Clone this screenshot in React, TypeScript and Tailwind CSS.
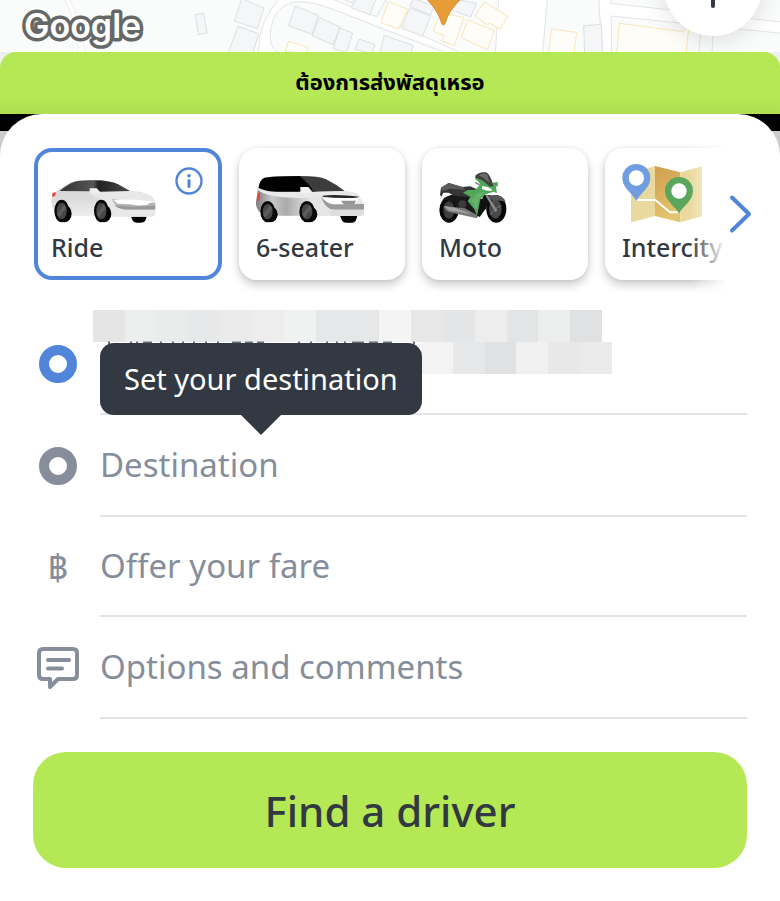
import React from 'react';
import clsx from 'clsx';

const firstRowCells = [
  'bg-[#e5e5e5]', 'bg-[#eceeed]', 'bg-[#eaeceb]', 'bg-[#e6e8ea]',
  'bg-[#ebebeb]', 'bg-[#ededed]', 'bg-[#f0f2f1]', 'bg-[#e6e7e9]',
  'bg-[#e5e7e9]', 'bg-[#f4f4f4]', 'bg-[#e7e7e7]', 'bg-[#e3e5e7]',
  'bg-[#ededed]', 'bg-[#e2e4e6]', 'bg-[#ebeeec]', 'bg-[#dfe1e2]',
];

const secondRowCells = [
  'bg-[#f3f3f3]', 'bg-[#e5e7e9]', 'bg-[#e0e1e3]',
  'bg-[#f0f0f0]', 'bg-[#e8e8e8]', 'bg-[#ebebeb]',
];

function MapStrip() {
  return (
    <svg
      className="absolute inset-0 h-full w-full"
      viewBox="0 0 2340 156"
      preserveAspectRatio="xMidYMin slice"
      aria-hidden="true"
    >
      <rect width="2340" height="156" fill="#fafcfb" />
      {/* roads */}
      <g fill="#fff" stroke="#e2e4e5" strokeWidth="3">
        <path d="M192 -5 Q228 60 236 160 L255 160 Q246 60 206 -5Z" stroke="#eeeff0" />
        <path d="M840 -5 Q775 60 775 160 L832 158 Q805 140 812 90 Q822 20 880 6 Q930 0 1010 32 L1500 208 L1500 160 L1640 160 L1642 -5 L1495 -5 L1484 160 L1400 160 L1170 75 L990 -5Z" stroke="none" />
        <path d="M840 -5 Q775 60 775 160" fill="none" />
        <path d="M832 156 Q805 140 812 90 Q822 20 880 6 Q930 0 1010 32 L1170 95 L1340 160" fill="none" />
        <path d="M990 -5 L1130 50 L1160 -5" fill="none" />
        <path d="M1170 62 L1385 160" fill="none" />
        <path d="M1496 -5 L1486 160 L1628 160 L1642 -5Z" stroke="none" />
        <path d="M1496 -5 L1486 160" fill="none" />
        <path d="M1642 -5 L1628 160 L1836 160 L1834 48 L2345 98 L2345 65 L1832 10 L1834 -5Z" stroke="none" />
        <path d="M1795 -5 L1808 160 M1834 -5 L1832 10 L2345 66 M1834 160 L1834 48 L2345 100 M2103 80 L2097 160 M2140 85 L2136 160" fill="none" />
      </g>
      <path d="M1642 -5 L1628 160 L1806 160 L1796 -5Z" fill="#fafcfb" stroke="#e2e4e5" strokeWidth="3" />
      {/* houses */}
      <g fill="#f5f6f8" stroke="#dcdee2" strokeWidth="3">
        <path d="M586 44 L611 40 L621 99 L595 104Z" />
        <path d="M725 -4 L792 24 L772 86 L703 63Z" />
        <path d="M714 79 L776 101 L758 160 L684 160Z" />
        <path d="M886 18 L955 46 L936 103 L865 77Z" />
        <path d="M958 52 L1021 82 L999 134 L937 107Z" />
        <path d="M1018 84 L1058 99 L1040 158 L1000 146Z" />
        <path d="M1022 -5 L1060 10 L1068 -5Z" />
        <path d="M1070 -5 L1128 -5 L1110 44 L1054 23Z" />
        <path d="M1078 117 L1125 134 L1116 160 L1064 148Z" />
        <path d="M1152 106 L1240 136 L1232 160 L1140 160Z" />
        <path d="M1228 25 L1292 47 L1268 109 L1205 84Z" />
        <path d="M1240 -5 L1302 18 L1292 45 L1230 20Z" />
        <path d="M1355 -5 L1430 10 L1412 51 L1350 28Z" />
        <path d="M1751 77 L1804 73 L1808 160 L1754 160Z" />
      </g>
      <g fill="#fffdf7" stroke="#fae5b8" strokeWidth="3">
        <path d="M1165 5 L1222 27 L1196 87 L1143 68Z" />
        <path d="M866 123 L924 143 L918 160 L856 154Z" />
        <path d="M1452 6 L1524 48 L1501 88 L1470 70 L1462 74 L1426 48Z" />
        <path d="M1404 60 L1483 92 L1462 149 L1383 113Z" />
        <path d="M1320 40 L1392 52 L1363 137 L1325 122 L1332 106 L1299 93Z" />
        <path d="M1655 87 L1730 97 L1722 160 L1645 160Z" />
        <path d="M1858 70 L2050 95 L2056 82 L2066 84 L2058 160 L1849 160Z" />
      </g>
      {/* pickup marker tip */}
      <path d="M1280 -3 Q1315 32 1325 70 Q1330 80 1335 70 Q1345 32 1383 -3Z" fill="#e69d38" stroke="#d68b2b" strokeWidth="3" />
    </svg>
  );
}

function Wheel({ cx, cy, rx, ry }: { cx: number; cy: number; rx: number; ry: number }) {
  return (
    <g>
      <ellipse cx={cx + 8} cy={cy + 8} rx={rx} ry={ry - 8} fill="#000" />
      <ellipse cx={cx} cy={cy} rx={rx} ry={ry} fill="#080808" />
      <ellipse cx={cx} cy={cy} rx={rx - 7} ry={ry - 9} fill="#474747" />
      <path d={`M${cx - 14} ${cy + 8} L${cx + 8} ${cy - 20} L${cx + 14} ${cy - 8} L${cx - 8} ${cy + 19}Z`} fill="#5c5c5c" />
    </g>
  );
}

function RideCar() {
  return (
    <svg className="h-[58px] w-[106px] overflow-visible" viewBox="93 75 318 174" aria-hidden="true">
      <defs>
        <linearGradient id="rideBody" x1="0" y1="0" x2="0" y2="1">
          <stop offset="0" stopColor="#cfcfcf" />
          <stop offset="0.5" stopColor="#dcdcdc" />
          <stop offset="1" stopColor="#eeeeee" />
        </linearGradient>
        <linearGradient id="rideGlass" x1="0" y1="0" x2="1" y2="0">
          <stop offset="0" stopColor="#333" />
          <stop offset="0.48" stopColor="#555" />
          <stop offset="0.55" stopColor="#222" />
          <stop offset="1" stopColor="#4a4a4a" />
        </linearGradient>
      </defs>
      <path d="M332 224 H380 Q380 248 362 248 H350 Q336 248 332 224Z" fill="#000" />
      <path d="M98 162 Q122 142 150 128 Q170 119 220 120 Q275 120 295 133 L332 153 Q380 156 398 172 Q408 184 406 222 Q404 229 394 230 L150 228 L112 224 Q90 200 94 180Z" fill="url(#rideBody)" />
      <path d="M210 160 Q280 150 335 153 Q380 157 398 172 L406 192 L405 222 Q404 229 394 230 H270 Q268 180 240 176 Q222 172 210 160Z" fill="#e8e8e8" />
      <path d="M119 153 Q142 133 164 125 Q185 119 226 121 Q270 122 294 133 L330 153 L238 155 L230 147 L212 146 L209 154Z" fill="url(#rideGlass)" />
      <path d="M209 145 L230 145 L240 155 L236 161 L209 160Z" fill="#eeeeee" />
      <path d="M97 160 L107 156 L106 167 L97 171Z" fill="#ed3f32" />
      <path d="M276 177 Q300 178 318 187 Q350 193 406 188 V209 H318 Q286 207 276 177Z" fill="#b4b4b4" />
      <path d="M280 180 Q340 176 396 184 L382 194 Q350 199 330 193 L293 191Z" fill="#fff" />
      <path d="M283 195 Q310 202 405 198 V208 H316 Q293 207 283 195Z" fill="#999" />
      <Wheel cx={125} cy={213} rx={22} ry={34} />
      <Wheel cx={244} cy={213} rx={22} ry={34} />
    </svg>
  );
}

function SixSeaterCar() {
  return (
    <svg className="h-[58px] w-[108px] overflow-visible" viewBox="78 75 324 174" aria-hidden="true">
      <defs>
        <linearGradient id="vanBody" x1="0" y1="0" x2="1" y2="0">
          <stop offset="0" stopColor="#808080" />
          <stop offset="0.15" stopColor="#c9c9c9" />
          <stop offset="0.28" stopColor="#aaa" />
          <stop offset="0.5" stopColor="#e4e4e4" />
          <stop offset="1" stopColor="#eaeaea" />
        </linearGradient>
      </defs>
      <path d="M330 224 H382 Q380 248 366 248 H348 Q334 248 330 224Z" fill="#000" />
      <path d="M82 160 Q84 130 102 114 Q120 108 190 108 Q270 108 290 118 Q320 134 344 153 Q385 158 389 170 L402 192 V222 Q400 228 390 228 L140 227 L88 216 Q76 200 78 186Z" fill="url(#vanBody)" />
      <path d="M86 143 Q88 122 102 114 Q122 108 212 108 L260 155 H120 Q98 150 86 143Z" fill="#000" />
      <path d="M208 108 Q268 108 288 118 Q318 133 344 153 L250 155 Q240 132 208 108Z" fill="#3c3c3c" />
      <path d="M84 145 Q105 154 140 156 L235 156 L350 154 Q385 158 389 168 L275 168 Q230 176 190 173 Q110 172 84 150Z" fill="#e9e9e9" />
      <path d="M211 141 H235 L246 154 L240 160 H211Z" fill="#f2f2f2" />
      <path d="M83 160 L90 158 V180 L81 184Z" fill="#ee4237" />
      <path d="M274 171 Q300 192 330 192 H402 V209 H312 Q284 207 274 171Z" fill="#9b9b9b" />
      <path d="M278 167 Q320 162 388 170 L380 173 Q330 176 278 170Z" fill="#262626" />
      <path d="M276 173 Q330 176 386 173 L377 193 H310 Q288 188 276 173Z" fill="#fff" />
      <path d="M333 182 H378 L373 194 H342Z" fill="#969696" />
      <path d="M304 209 H402 V222 Q400 228 390 228 H300Z" fill="#dedede" />
      <Wheel cx={113} cy={215} rx={22} ry={32} />
      <Wheel cx={231} cy={215} rx={23} ry={32} />
    </svg>
  );
}

function Motorcycle() {
  return (
    <svg className="h-[58px] w-[68px] overflow-visible" viewBox="72 75 204 174" aria-hidden="true">
      <ellipse cx="102" cy="210" rx="29" ry="38" fill="#080808" />
      <ellipse cx="102" cy="210" rx="17" ry="26" fill="#3f3f3f" />
      <ellipse cx="244" cy="207" rx="30" ry="41" fill="#080808" />
      <ellipse cx="241" cy="207" rx="19" ry="29" fill="#484848" />
      <path d="M228 190 L240 207 L226 224 M240 207 L259 197" stroke="#777" strokeWidth="3" fill="none" />
      <path d="M84 176 Q110 158 160 160 L208 180 L215 205 L188 230 L130 220 L118 190Z" fill="#191919" />
      <circle cx="142" cy="193" r="12" fill="#3b3b3b" />
      <path d="M75 165 L78 143 L101 129 L142 141 L166 139 L190 150 L174 172 L120 168 L100 158 L85 158 L79 170Z" fill="#353535" />
      <path d="M78 143 L101 129 L142 141 L152 150 L105 146 L82 154Z" fill="#5a5a5a" />
      <path d="M86 198 L150 205 L186 225 V235 L104 217 Q90 212 86 198Z" fill="#777" />
      <path d="M86 198 L120 203 L170 222 L104 212Z" fill="#a4a4a4" />
      <path d="M205 165 L228 166 L222 190 L194 232 L188 225Z" fill="#111" />
      <path d="M215 166 L244 214" stroke="#8b8b8b" strokeWidth="7" />
      <path d="M218 168 Q262 158 272 186 Q250 178 234 184Z" fill="#555" />
      <path d="M179 114 L190 108 L232 128 L248 126 L249 136 L243 142 L246 160 L236 155 L212 163 L196 178 L186 228 L178 208 L158 184 L166 170 L144 158 L158 150 L180 150 L196 133Z" fill="#52a65a" />
      <path d="M186 160 L210 156 L192 178 L184 210 L176 190 L164 181 L178 172Z" fill="#75bb7a" opacity="0.6" />
      <path d="M181 107 Q192 94 213 97 Q226 102 235 137 L225 140 Q200 116 181 113Z" fill="#414141" />
      <path d="M190 105 Q206 96 217 104 L224 129 Q208 113 190 105Z" fill="#696969" />
      <path d="M201 139 Q215 137 231 148 L229 153 Q212 153 201 147Z" fill="#fff" />
      <path d="M181 127 L194 135" stroke="#777" strokeWidth="4" />
    </svg>
  );
}

function IntercityMap() {
  return (
    <svg className="h-[58px] w-[80px] overflow-visible" viewBox="96 75 240 174" aria-hidden="true">
      <defs>
        <linearGradient id="mapFold" x1="0" y1="0" x2="0.3" y2="1">
          <stop offset="0" stopColor="#cf9d4e" />
          <stop offset="1" stopColor="#e4c46c" />
        </linearGradient>
      </defs>
      <path d="M123 98 L195 78 V228 L123 247Z" fill="#ead99f" />
      <path d="M195 78 L271 97 V247 L195 228Z" fill="url(#mapFold)" />
      <path d="M271 97 L336 79 V229 L271 247Z" fill="#ead99f" />
      <path d="M139 180 H196 L240 217 H266" fill="none" stroke="#fff" strokeWidth="6" />
      <path d="M139 183 C130 162 97 145 97 114 A42 42 0 0 1 181 114 C181 145 148 162 139 183Z" fill="#719de1" />
      <circle cx="139" cy="114" r="23" fill="#fff" />
      <path d="M267 221 C258 200 225 184 225 153 A42 42 0 0 1 309 153 C309 184 276 200 267 221Z" fill="#5aa65d" />
      <circle cx="267" cy="153" r="23" fill="#fff" />
    </svg>
  );
}

const services = [
  { name: 'Ride', icon: <RideCar />, selected: true },
  { name: '6-seater', icon: <SixSeaterCar />, selected: false },
  { name: 'Moto', icon: <Motorcycle />, selected: false },
  { name: 'Intercity', icon: <IntercityMap />, selected: false },
];

function ServiceCard({ name, icon, selected }: (typeof services)[number]) {
  return (
    <button
      type="button"
      aria-pressed={selected}
      className={clsx(
        'flex shrink-0 flex-col gap-2 rounded-[18px] bg-white text-left',
        selected
          ? 'w-[188px] border-4 border-[#5185da] p-[13px]'
          : 'w-[166px] p-[17px] shadow-[0_5px_10px_rgba(0,0,0,0.2),0_0_4px_rgba(0,0,0,0.08)]'
      )}
    >
      <span className="flex w-full items-start justify-between">
        {icon}
        {selected && (
          <svg className="mt-0.5 mr-0.5 h-7 w-7" viewBox="0 0 28 28" fill="none" stroke="#5185da" strokeWidth="2.4" aria-hidden="true">
            <circle cx="14" cy="14" r="12.5" />
            <path d="M14 13.5 V19.5" strokeWidth="3" strokeLinecap="round" />
            <circle cx="14" cy="8.8" r="1.8" fill="#5185da" stroke="none" />
          </svg>
        )}
      </span>
      <span className="text-[25px] leading-8 font-medium text-[#323942]">{name}</span>
    </button>
  );
}

function PointIcon({ className }: { className: string }) {
  return <span className={clsx('block h-[38px] w-[38px] rounded-full border-[10px]', className)} />;
}

function CommentIcon() {
  return (
    <svg className="h-[42px] w-[42px]" viewBox="0 0 42 42" fill="none" stroke="#868e9b" strokeWidth="4" strokeLinejoin="round" strokeLinecap="round" aria-hidden="true">
      <path d="M6 2 H36 Q40 2 40 6 V28 Q40 32 36 32 H21 L13 40 V32 H6 Q2 32 2 28 V6 Q2 2 6 2Z" />
      <path d="M11 13 H32 M11 21.5 H25" />
    </svg>
  );
}

function FieldRow({ icon, label, className }: { icon: React.ReactNode; label: string; className: string }) {
  return (
    <label className={clsx('flex items-stretch gap-[17px]', className)}>
      <span className="flex w-[50px] shrink-0 items-center justify-center">{icon}</span>
      <input
        type="text"
        aria-label={label}
        placeholder={label}
        className="min-w-0 flex-1 border-b-2 border-[#e1e3e8] bg-transparent text-[33px] text-[#323942] outline-none placeholder:text-[#868e9b] placeholder:opacity-100"
      />
    </label>
  );
}

function PickupRow() {
  return (
    <div className="flex h-[102px] items-stretch gap-[17px]">
      <span className="flex w-[50px] shrink-0 items-center justify-center">
        <PointIcon className="border-[#5185da]" />
      </span>
      <div className="relative min-w-0 flex-1 border-b-2 border-[#e1e3e8]">
        {/* masked address */}
        <div className="absolute -top-[3px] -left-[7px] flex h-8 w-[509px]">
          {firstRowCells.map((cell, i) => (
            <span key={i} className={clsx('flex-1', cell)} />
          ))}
        </div>
        <div className="absolute top-[29px] left-[321px] flex h-8 w-[191px]">
          {secondRowCells.map((cell, i) => (
            <span key={i} className={clsx('flex-1', cell)} />
          ))}
        </div>
        <svg className="absolute top-[28px] left-0 h-1 w-[320px]" viewBox="0 0 320 4" aria-hidden="true">
          <path
            d="M8 2 H10 M30 2 H32 M36 2 H38 M43 2 H52 M60 2 H62 M72 2 H74 M82 2 H84 M93 2 H95 M105 2 H107 M117 2 H119 M132 2 H141 M145 2 H153 M157 2 H164 M198 2 H200 M210 2 H212 M226 2 H228 M236 2 H238 M244 2 H246 M252 2 H264 M269 2 H278 M283 2 H292 M313 2 H315"
            stroke="#6b7078"
            strokeWidth="3"
          />
        </svg>
        <div role="tooltip" className="absolute top-[30px] left-0 z-10 rounded-[14px] bg-[#323942] px-6 py-4 text-[29px] leading-10 whitespace-nowrap text-white">
          Set your destination
          <svg className="absolute top-full left-1/2 h-5 w-10 -translate-x-1/2" viewBox="0 0 40 20" aria-hidden="true">
            <path d="M0 0 H40 L20 20Z" fill="#323942" />
          </svg>
        </div>
      </div>
    </div>
  );
}

export default function App() {
  return (
    <main className="min-h-screen bg-white font-['Noto_Sans','Noto_Sans_Thai',sans-serif]">
      <header className="relative h-[52px] overflow-hidden">
        <MapStrip />
        <svg className="absolute top-0 left-5 h-[52px] w-[126px]" viewBox="0 0 126 52" role="img" aria-label="Google">
          <text
            x="4"
            y="38"
            fontFamily="Inter, sans-serif"
            fontSize="34"
            fontWeight="600"
            fill="#fff"
            stroke="#666867"
            strokeWidth="7"
            strokeLinejoin="round"
            paintOrder="stroke"
          >
            Google
          </text>
        </svg>
        <button
          type="button"
          aria-label="My location"
          className="absolute -top-[62px] right-[18px] flex h-[98px] w-[98px] items-end justify-center rounded-full bg-white pb-7 shadow-[0_4px_24px_rgba(0,0,0,0.12)]"
        >
          <svg className="h-9 w-9" viewBox="0 0 36 36" fill="none" stroke="#323942" strokeWidth="4" strokeLinecap="round" aria-hidden="true">
            <circle cx="18" cy="13" r="13" />
            <path d="M18 26 V34" />
          </svg>
        </button>
      </header>

      <div className="bg-[#eef0ef]">
        <a
          href="#parcel"
          className="flex h-[62px] items-center justify-center rounded-t-2xl bg-[#b4e654] bg-linear-to-b from-[#b5e854] from-70% to-[#aedf52] pb-1 text-[22px] font-bold text-black"
        >
          ต้องการส่งพัสดุเหรอ
        </a>
      </div>

      <div className="bg-[linear-gradient(#000_17px,#cccccc_17px)]">
        <section className="rounded-t-[42px] bg-white pb-[33px]">
          <div className="flex">
            <div className="relative min-w-0 flex-1">
              <div className="flex gap-[17px] overflow-hidden pt-[34px] pb-[33px] pl-[34px]">
                {services.map((service) => (
                  <ServiceCard key={service.name} {...service} />
                ))}
              </div>
              <div className="pointer-events-none absolute inset-y-0 right-0 w-9 bg-linear-to-r from-white/0 to-white" />
            </div>
            <button type="button" aria-label="Next" className="flex w-[54px] shrink-0 items-center pl-[3px]">
              <svg className="h-10 w-6" viewBox="0 0 24 40" fill="none" stroke="#5185da" strokeWidth="4" strokeLinecap="round" strokeLinejoin="round" aria-hidden="true">
                <path d="M3 3.5 L20 20 L3 36.5" />
              </svg>
            </button>
          </div>

          <form className="px-[33px]" onSubmit={(e) => e.preventDefault()}>
            <PickupRow />
            <FieldRow className="h-[102px]" label="Destination" icon={<PointIcon className="border-[#868e9b]" />} />
            <FieldRow
              className="h-[100px]"
              label="Offer your fare"
              icon={<span className="text-[35px] leading-10 text-[#868e9b]">฿</span>}
            />
            <FieldRow className="h-[102px]" label="Options and comments" icon={<CommentIcon />} />
            <button
              type="submit"
              className="mt-[33px] h-[116px] w-full rounded-[33px] bg-[#b4e854] text-[42px] font-medium text-[#323942]"
            >
              Find a driver
            </button>
          </form>
        </section>
      </div>
    </main>
  );
}
